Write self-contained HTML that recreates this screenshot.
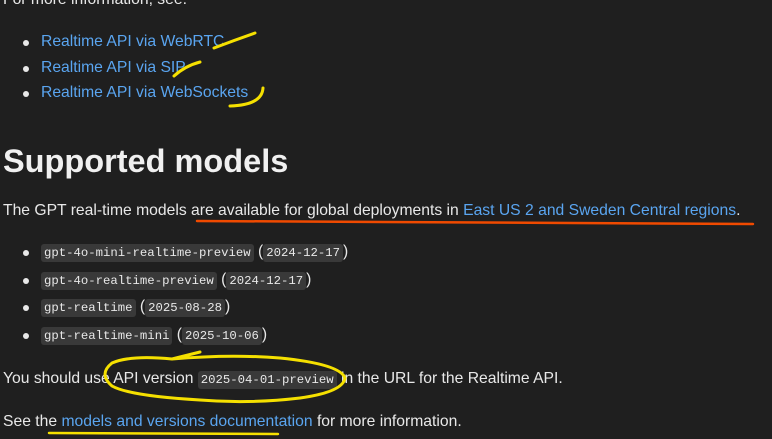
<!DOCTYPE html>
<html><head><style>
html,body{margin:0;padding:0;background:#1f1f1f;width:772px;height:439px;overflow:hidden;position:relative}
.t{position:absolute;font-family:"Liberation Sans",sans-serif;font-size:15.7px;color:#e8e8e8;white-space:nowrap;line-height:20px}
a{color:#5aa5f0;text-decoration:none}
.b{position:absolute;width:6px;height:6px;border-radius:50%;background:#e8e8e8}
code{font-family:"Liberation Mono",monospace;font-size:12.3px;background:#393939;border-radius:3px;padding:2px 3px;color:#e8e8e8}
h1{position:absolute;margin:0;left:3px;top:141px;font-family:"Liberation Sans",sans-serif;font-size:32.5px;font-weight:bold;color:#f0f0f0;line-height:40px}
</style></head><body>
<div class="t" style="left:3px;top:-10px">For more information, see:</div>
<div class="b" style="left:23px;top:40px"></div><div class="t" style="left:41px;top:32px"><a>Realtime API via WebRTC</a></div>
<div class="b" style="left:23px;top:66px"></div><div class="t" style="left:41px;top:58px"><a>Realtime API via SIP</a></div>
<div class="b" style="left:23px;top:91px"></div><div class="t" style="left:41px;top:83px"><a>Realtime API via WebSockets</a></div>
<h1>Supported models</h1>
<div class="t" style="left:3px;top:201px">The GPT real-time models are available for global deployments in <a>East US 2 and Sweden Central regions</a>.</div>
<div class="b" style="left:23px;top:250px"></div><div class="t" style="left:41px;top:242px"><code>gpt-4o-mini-realtime-preview</code> (<code>2024-12-17</code>)</div>
<div class="b" style="left:23px;top:278px"></div><div class="t" style="left:41px;top:270px"><code>gpt-4o-realtime-preview</code> (<code>2024-12-17</code>)</div>
<div class="b" style="left:23px;top:305px"></div><div class="t" style="left:41px;top:297px"><code>gpt-realtime</code> (<code>2025-08-28</code>)</div>
<div class="b" style="left:23px;top:333px"></div><div class="t" style="left:41px;top:325px"><code>gpt-realtime-mini</code> (<code>2025-10-06</code>)</div>
<div class="t" style="left:3px;top:369px">You should use API version <code>2025-04-01-preview</code> in the URL for the Realtime API.</div>
<div class="t" style="left:3px;top:412px">See the <a>models and versions documentation</a> for more information.</div>
<svg width="772" height="439" style="position:absolute;left:0;top:0" fill="none" stroke-linecap="round" stroke-linejoin="round">
<path d="M214 48 Q235 40 255 33" stroke="#f5e000" stroke-width="3"/>
<path d="M174 76 Q185 66 200 62" stroke="#f5e000" stroke-width="3"/>
<path d="M230 106 Q262 105 263 88" stroke="#f5e000" stroke-width="3"/>
<path d="M197 221 L753 224" stroke="#f04a00" stroke-width="2.5"/>
<path d="M49 433 L278 434" stroke="#f5e000" stroke-width="2.5"/>
<path d="M200 352 L172 359 Q230 354 280 358 Q340 364 345 378 Q343 392 300 398 Q250 404 200 400 Q130 396 112 386 Q98 374 112 363 Q130 355 172 359" stroke="#f5e000" stroke-width="3"/>
</svg>
</body></html>
